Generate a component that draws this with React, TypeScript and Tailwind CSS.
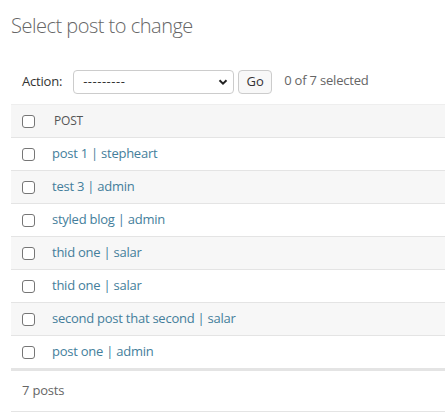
import React from "react";

const rows = [
  "post 1 | stepheart",
  "test 3 | admin",
  "styled blog | admin",
  "thid one | salar",
  "thid one | salar",
  "second post that second | salar",
  "post one | admin",
];

function Box() {
  return <div className="w-[13px] h-[13px] rounded-[3px] border border-[#767676] bg-white" />;
}

export default function App() {
  return (
    <div className="w-[445px] h-[415px] bg-white overflow-hidden text-[#333]" style={{ fontFamily: '"Open Sans", "Noto Sans", sans-serif' }}>
      <div className="pl-[11px]">
        <h1 className="pt-[13px] h-[58px] text-[20px] font-light text-[#666] tracking-[-0.5px] leading-[26px]">Select post to change</h1>
        <div className="flex items-center h-[46px] pl-[11px] text-[13px] pt-[2px]">
          <span className="text-[#333] mr-[11px] tracking-[-0.2px]">Action:</span>
          <div className="w-[161px] h-[24px] border border-[#ccc] rounded-[4px] flex items-center justify-between pl-[9px] pr-[5px] text-[#333]">
            <span className="tracking-[0.5px]">---------</span>
            <svg width="10" height="10" viewBox="0 0 10 10"><path d="M1.5 3.2 L5 6.6 L8.5 3.2" fill="none" stroke="#222" strokeWidth="2" /></svg>
          </div>
          <div className="ml-[4px] w-[34px] h-[24px] border border-[#ccc] rounded-[4px] bg-[#f8f8f8] flex items-center justify-center text-[#333]">Go</div>
          <span className="ml-[12px] -mt-[3px] text-[#666] tracking-[-0.2px]">0 of 7 selected</span>
        </div>
        <div className="border-t border-[#eee]">
          <div className="h-[33px] bg-[#f6f6f6] border-b border-[#e4e4e4] flex items-center pl-[11px]">
            <Box />
            <span className="ml-[19px] text-[12px] text-[#555] font-medium tracking-[-0.2px]">POST</span>
          </div>
          {rows.map((r, i) => (
            <div key={i} className={`h-[33px] flex items-center pl-[11px] border-b border-[#e4e4e4] ${i % 2 === 1 ? "bg-[#f7f7f7]" : "bg-white"}`}>
              <Box />
              <span className="ml-[17px] text-[13px] text-[#447e9b] font-medium tracking-[-0.25px]">{r}</span>
            </div>
          ))}
        </div>
        <div className="border-t-[2px] border-[#e4e4e4] h-[43px] flex items-center pl-[11px] border-b text-[13px] text-[#666] tracking-[-0.2px] pb-[1px]">7 posts</div>
      </div>
    </div>
  );
}
